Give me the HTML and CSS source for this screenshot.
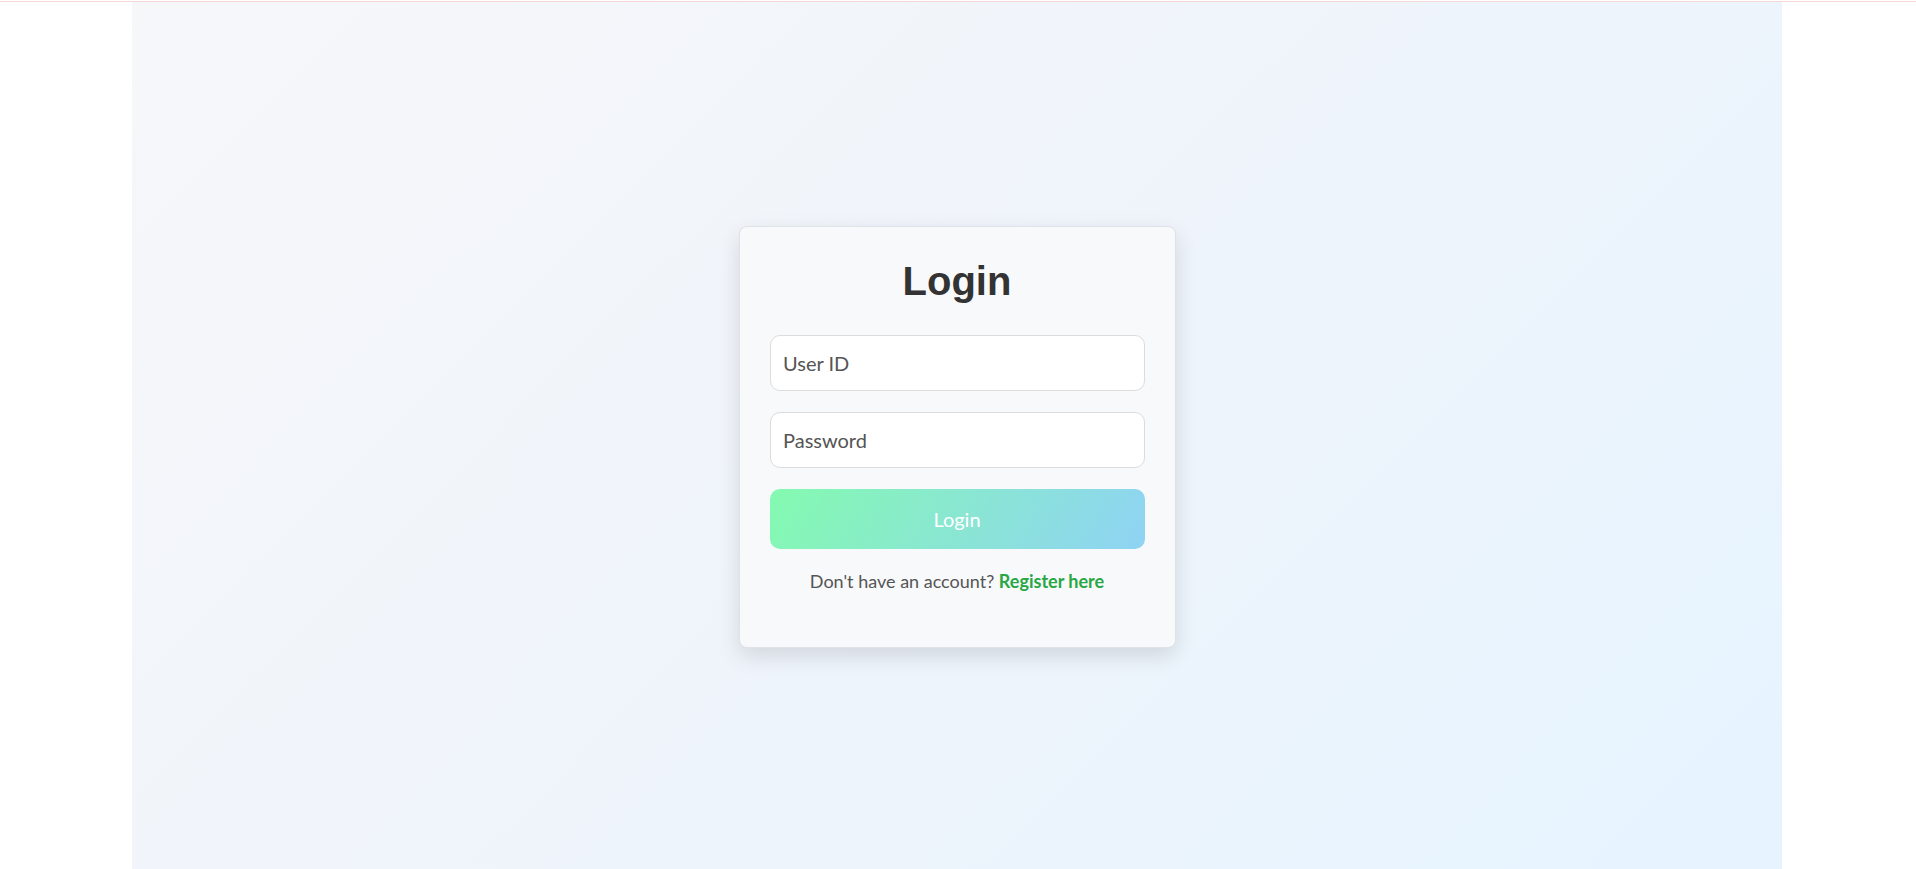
FILE: index.html
```html
<!DOCTYPE html>
<html lang="en">
<head>
<meta charset="utf-8">
<title>Login</title>
<link rel="stylesheet" href="styles.css">
</head>
<body>
<div class="topline"></div>
<main class="panel">
  <form class="card" onsubmit="return false;">
    <h1 class="title">Login</h1>
    <input class="field" type="text" placeholder="User ID">
    <input class="field" type="password" placeholder="Password">
    <button class="btn" type="submit">Login</button>
    <p class="foot">Don't have an account? <a class="link" href="#">Register here</a></p>
  </form>
</main>
</body>
</html>
```
FILE: styles.css
```css
html, body {
  margin: 0;
  padding: 0;
  background: #ffffff;
}
body {
  padding-top: 1px;
  font-family: Lato, "Open Sans", sans-serif;
}
.topline {
  height: 1px;
  background: #f6d6d6;
}
.panel {
  width: 1650px;
  margin: 0 auto 0 132px;
  min-height: 100vh;
  display: flex;
  align-items: center;
  justify-content: center;
  background: linear-gradient(135deg, #f6f7f9 0%, #eff4fb 50%, #e6f4ff 100%);
}
.card {
  width: 375px;
  padding: 31px 30px 33px;
  background: #f8f9fa;
  border: 1px solid #dfe2e6;
  border-radius: 8px;
  box-shadow: 0 8px 22px rgba(0, 0, 0, 0.12);
  display: flex;
  flex-direction: column;
}
.title {
  margin: 0 0 31px;
  font-family: "Liberation Sans", Arial, sans-serif;
  font-size: 40px;
  line-height: 46px;
  font-weight: 700;
  color: #333333;
  text-align: center;
}
.field {
  box-sizing: border-box;
  width: 100%;
  height: 56px;
  margin: 0 0 21px;
  padding: 0 12.5px;
  border: 1px solid #dcdcdc;
  border-radius: 10px;
  background: #ffffff;
  font-family: Lato, "Open Sans", sans-serif;
  font-size: 20px;
  color: #333;
  outline: none;
}
.field::placeholder {
  color: #555555;
  opacity: 1;
}
.btn {
  height: 60px;
  width: 100%;
  border: none;
  border-radius: 10px;
  background: linear-gradient(120deg, #84fab0 0%, #8fd3f4 100%);
  color: #ffffff;
  font-family: Lato, "Open Sans", sans-serif;
  font-size: 20px;
  cursor: pointer;
}
.foot {
  margin: 20px 0 20px;
  font-size: 18px;
  line-height: 25px;
  color: #555555;
  text-align: center;
}
.link {
  color: #28a745;
  font-weight: 700;
  text-decoration: none;
}
```
